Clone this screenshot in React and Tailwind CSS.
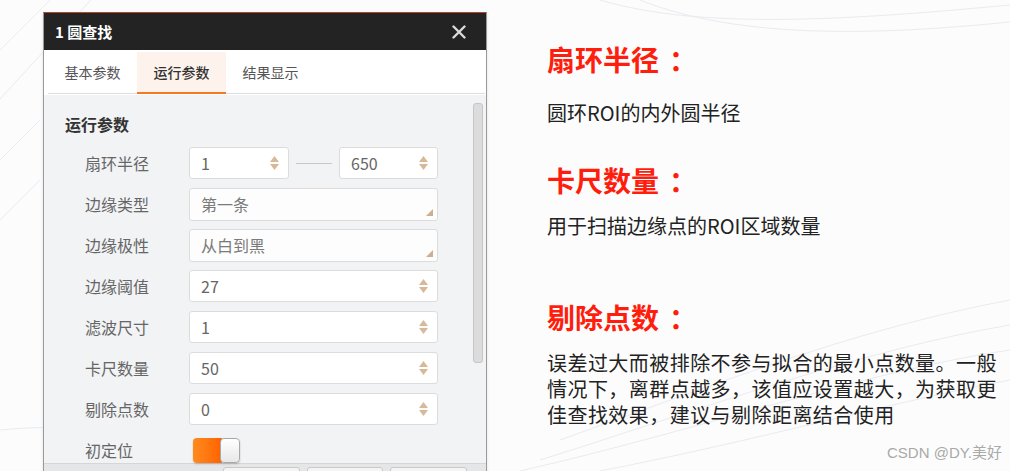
const CJK = { fontFamily: '"Noto Sans CJK SC", "Noto Sans", sans-serif' }

function Spinner() {
  return (
    <span className="flex flex-col items-center gap-[2px] shrink-0">
      <svg width="9" height="6" viewBox="0 0 9 6"><path d="M4.5 0 L9 6 L0 6 Z" fill="#d8b899" /></svg>
      <svg width="9" height="6" viewBox="0 0 9 6"><path d="M0 0 L9 0 L4.5 6 Z" fill="#d8b899" /></svg>
    </span>
  )
}

function NumBox({ value, className = '' }) {
  return (
    <div className={`h-[32px] bg-white border border-[#dcdcdc] rounded-[3px] flex items-center pl-[11px] pr-[9px] ${className}`}>
      <span className="flex-1 text-[16px] leading-none text-[#666]">{value}</span>
      <Spinner />
    </div>
  )
}

function SelectBox({ value }) {
  return (
    <div className="relative h-[33px] w-[249px] bg-[#fdfdfd] border border-[#dcdcdc] rounded-[3px] flex items-center pl-[11px]">
      <span className="text-[16px] leading-none text-[#7a7a7a]">{value}</span>
      <svg className="absolute right-[4px] bottom-[4px]" width="7" height="7" viewBox="0 0 7 7">
        <path d="M7 0 L7 7 L0 7 Z" fill="#ccae90" />
      </svg>
    </div>
  )
}

function Row({ label, children }) {
  return (
    <div className="flex items-center h-[32px]">
      <div className="w-[124px] shrink-0 pl-[20px] text-[16px] leading-none text-[#666]">{label}</div>
      {children}
    </div>
  )
}

function Dialog() {
  return (
    <div className="w-[444px] mt-[12px] ml-[43px] border-t border-[#b4472e] border-x border-x-[#9a9a9a] bg-white shrink-0 shadow-sm">
      {/* title bar */}
      <div className="h-[37px] bg-[#232323] flex items-center pl-[11px] pr-[20px]">
        <span className="text-white font-bold text-[15px] leading-none">1 圆查找</span>
        <svg className="ml-auto" width="14" height="14" viewBox="0 0 14 14">
          <path d="M1.5 1.5 L12.5 12.5 M12.5 1.5 L1.5 12.5" stroke="#dadada" strokeWidth="2.4" strokeLinecap="round" />
        </svg>
      </div>

      {/* tabs */}
      <div className="h-[44px] bg-white pl-[4px] pr-[1px] pt-[2px]">
        <div className="flex h-full border-b border-[#dedede]">
          <div className="w-[89px] flex items-center justify-center text-[14px] text-[#555]">基本参数</div>
          <div className="w-[89px] flex items-center justify-center text-[14px] font-medium text-[#333] bg-[#fdf3ec] border-b-2 border-[#f37a23] -mb-px">运行参数</div>
          <div className="w-[89px] flex items-center justify-center text-[14px] text-[#555]">结果显示</div>
        </div>
      </div>

      {/* content */}
      <div className="h-[368px] bg-[#f2f3f5] flex mt-[1px]">
        <div className="flex-1 pl-[21px] pt-[17px]">
          <div className="text-[16px] font-bold leading-[24px] text-[#333]">运行参数</div>
          <div className="flex flex-col gap-[9px] mt-[11px]">
            <Row label="扇环半径">
              <NumBox value="1" className="w-[100px]" />
              <div className="w-[36px] h-px bg-[#c8c8c8] mx-[7px]" />
              <NumBox value="650" className="w-[99px]" />
            </Row>
            <Row label="边缘类型"><SelectBox value="第一条" /></Row>
            <Row label="边缘极性"><SelectBox value="从白到黑" /></Row>
            <Row label="边缘阈值"><NumBox value="27" className="w-[249px]" /></Row>
            <Row label="滤波尺寸"><NumBox value="1" className="w-[249px]" /></Row>
            <Row label="卡尺数量"><NumBox value="50" className="w-[249px]" /></Row>
            <Row label="剔除点数"><NumBox value="0" className="w-[249px]" /></Row>
            <Row label="初定位">
              <div className="ml-[4px] flex h-[25px] w-[47px] rounded-[4px] overflow-hidden shadow-[0_1px_2px_rgba(0,0,0,0.2)]">
                <div className="flex-1 bg-gradient-to-r from-[#ff8a1c] to-[#ff6200]" />
                <div className="w-[20px] bg-gradient-to-b from-[#ffffff] to-[#e8e8e8] border border-[#a8a8a8] rounded-[4px] -ml-[2px]" />
              </div>
            </Row>
          </div>
        </div>
        {/* scrollbar */}
        <div className="w-[14px] pt-[8px] pl-[1px]">
          <div className="w-[10px] h-[260px] bg-[#dcdcdc] border border-[#c6c6c6] rounded-[3px]" />
        </div>
      </div>

      {/* footer strip */}
      <div className="h-[40px] bg-[#e5e6e8] border-t border-[#d6d6d6] flex pt-[3px] pl-[179px] gap-[7px]">
        <div className="w-[77px] h-[30px] bg-[#f4f4f4] border border-[#c9c9c9] rounded-[3px]" />
        <div className="w-[76px] h-[30px] bg-[#f4f4f4] border border-[#c9c9c9] rounded-[3px]" />
        <div className="w-[77px] h-[30px] bg-[#f4f4f4] border border-[#c9c9c9] rounded-[3px]" />
      </div>
    </div>
  )
}

function Heading({ children, className = '' }) {
  return (
    <div className={`text-[28px] font-bold leading-[28px] text-[#ff1d0d] ${className}`}>
      {children}<span className="ml-[10px]">：</span>
    </div>
  )
}

function Notes() {
  return (
    <div className="ml-[60px] flex flex-col">
      <Heading className="mt-[45px]">扇环半径</Heading>
      <div className="mt-[30px] text-[20px] leading-[20px] text-[#222]">圆环ROI的内外圆半径</div>
      <Heading className="mt-[43px]">卡尺数量</Heading>
      <div className="mt-[22px] text-[20px] leading-[20px] text-[#222]">用于扫描边缘点的ROI区域数量</div>
      <Heading className="mt-[67px]">剔除点数</Heading>
      <div className="mt-[19px] text-[20px] leading-[26px] tracking-[0.45px] text-[#222]">
        <div>误差过大而被排除不参与拟合的最小点数量。一般</div>
        <div>情况下，离群点越多，该值应设置越大，为获取更</div>
        <div>佳查找效果，建议与剔除距离结合使用</div>
      </div>
    </div>
  )
}

export default function App() {
  return (
    <div className="relative w-[1010px] h-[471px] overflow-hidden bg-[#fcfcfc]" style={CJK}>
      {/* faint background waves */}
      <svg className="absolute inset-0" width="1010" height="471" viewBox="0 0 1010 471">
        <g fill="none" stroke="#e9ebef" strokeWidth="1">
          <path d="M-10 60 L60 -10" />
          <path d="M-10 110 L100 -10" />
          <path d="M-10 170 L40 120" />
          <path d="M-10 230 L40 180" />
          <path d="M600 0 C700 30 850 20 1010 5" />
          <path d="M640 0 C740 40 880 35 1010 22" />
          <path d="M560 440 C700 390 850 330 1010 300" />
          <path d="M540 460 C700 410 860 350 1010 325" />
          <path d="M520 471 C700 430 870 370 1010 350" />
          <path d="M600 471 C760 440 900 400 1010 380" />
          <path d="M0 430 C100 420 200 440 300 471" />
        </g>
      </svg>
      <div className="relative flex">
        <Dialog />
        <Notes />
      </div>
      <div
        className="absolute left-[887px] top-[443px] text-[15px] leading-[20px] text-[#a9a9a9]"
        style={{ fontFamily: '"Liberation Sans", "Noto Sans CJK SC", sans-serif' }}
      >
        CSDN @DY.美好
      </div>
    </div>
  )
}
